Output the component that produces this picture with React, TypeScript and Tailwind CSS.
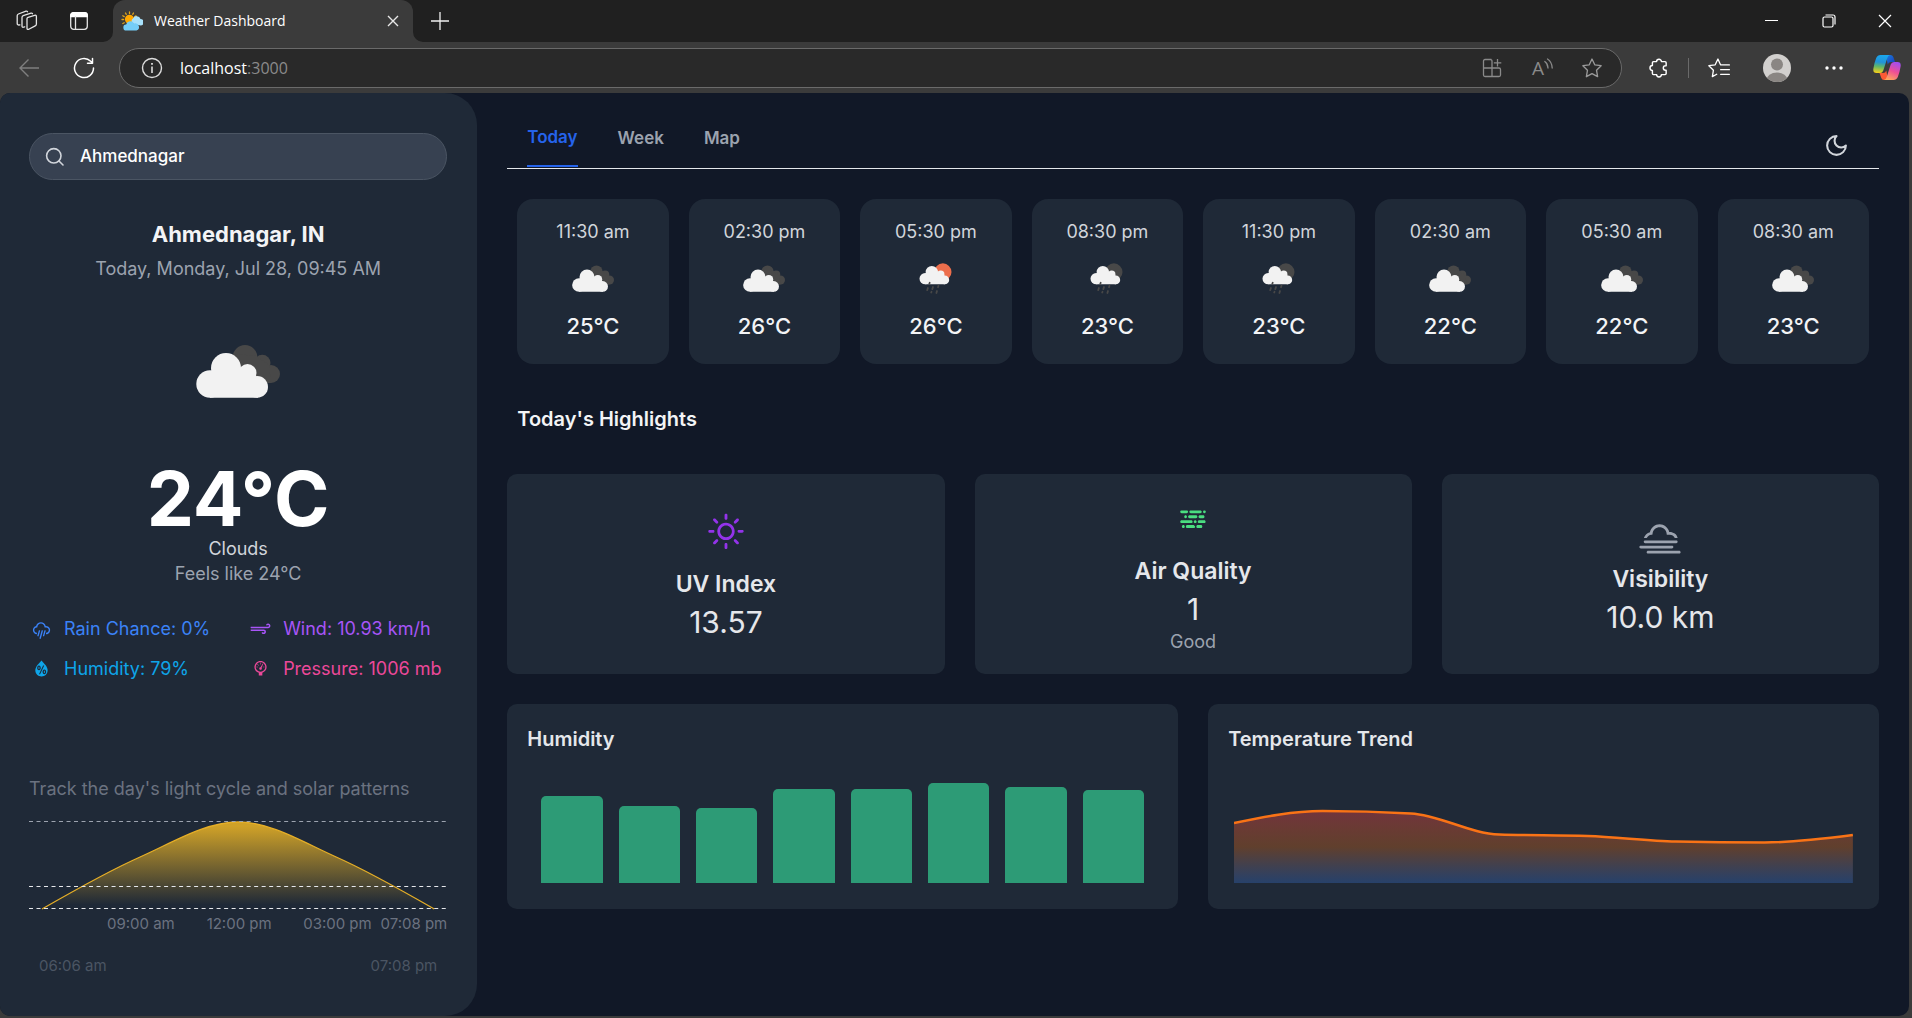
import React, { useState } from "react";
import {
  WiBarometer,
  WiDaySunny,
  WiDust,
  WiFog,
  WiHumidity,
  WiRain,
  WiStrongWind,
} from "react-icons/wi";

type Point = [number, number];

/** Builds a monotone cubic path through the points, so peaks stay flat. */
function monotonePath(points: Point[]): string {
  const n = points.length;
  const slopes: number[] = [];
  for (let i = 0; i < n - 1; i++) {
    slopes.push((points[i + 1][1] - points[i][1]) / (points[i + 1][0] - points[i][0]));
  }
  const tangents = points.map((_, i) => {
    if (i === 0 || i === n - 1) return 0;
    const a = slopes[i - 1];
    const b = slopes[i];
    return (Math.sign(a) + Math.sign(b)) * Math.min(Math.abs(a), Math.abs(b), 0.5 * Math.abs((a + b) / 2)) || 0;
  });
  tangents[0] = (3 * slopes[0] - tangents[1]) / 2;
  tangents[n - 1] = (3 * slopes[n - 2] - tangents[n - 2]) / 2;
  let d = `M${points[0][0]},${points[0][1]}`;
  for (let i = 0; i < n - 1; i++) {
    const [x0, y0] = points[i];
    const [x1, y1] = points[i + 1];
    const dx = (x1 - x0) / 3;
    d += `C${x0 + dx},${y0 + dx * tangents[i]},${x1 - dx},${y1 - dx * tangents[i + 1]},${x1},${y1}`;
  }
  return d;
}

function WhiteCloud() {
  return (
    <g fill="#f2f2f2">
      <circle cx="52" cy="66" r="15" />
      <circle cx="36" cy="82" r="13.7" />
      <circle cx="73.5" cy="71" r="9" />
      <circle cx="83.2" cy="84.9" r="10.8" />
      <path d="M36 70L52 60L67 66L74 66L82.5 74.1L84 95.7H36z" />
    </g>
  );
}

function CloudsIcon({ className }: { className: string }) {
  return (
    <svg viewBox="0 0 128 128" className={className} aria-label="Clouds" role="img">
      <g fill="#484848">
        <circle cx="71" cy="55.5" r="12.4" />
        <circle cx="88.3" cy="61" r="8.2" />
        <circle cx="97" cy="72" r="9" />
        <path d="M62 52L82 54L95 63L97 81L80 81L60 70z" />
      </g>
      <WhiteCloud />
    </svg>
  );
}

function RainIcon({ className, day }: { className: string; day: boolean }) {
  return (
    <svg viewBox="0 0 128 128" className={className} aria-label="Rain" role="img">
      <circle cx="77.7" cy="56" r="17.3" fill={day ? "#ec6e4c" : "#484848"} />
      <g transform="translate(12.6 1.6) scale(0.827)">
        <WhiteCloud />
      </g>
      <g stroke="#484848" strokeWidth="3.6" strokeLinecap="round">
        <path d="M51.4 77.5L50.6 79.5M47.8 88L46.4 92.4M58 86L56.6 90.2M69 83.5L68 86.5M55 95.6L54.4 97M66 94L64.8 98" />
      </g>
    </svg>
  );
}

function WorkspacesIcon() {
  return (
    <svg viewBox="0 0 22 22" className="size-[22px]" fill="none" stroke="#e4e4e4" strokeWidth="1.3" strokeLinejoin="round" strokeLinecap="round">
      <path d="M11 8.6q0-1 1-1.3l6.6-2q1.6-.4 1.8 1.2v7.6q0 1.3-1.2 1.8l-6.4 3.4q-1.6.6-1.8-1z" />
      <path d="M8.7 16.8l-1.2.4Q6 17.6 6 16V7.6q0-1.4 1.2-1.9L15 3.2q1-.3 1.5.5" />
      <path d="M3.9 14.8l-1 .2Q1.2 15 1.2 13.4V5.8q0-1.3 1.2-1.8L10 1.2q1-.3 1.5.5" />
    </svg>
  );
}

function TabActionsIcon() {
  return (
    <svg viewBox="0 0 20 20" className="size-5" fill="none" stroke="#e4e4e4" strokeWidth="1.3">
      <rect x="1.7" y="1.7" width="16.6" height="16.6" rx="3" />
      <path d="M1.7 5.5V4.5a2.8 2.8 0 0 1 2.8-2.8h11a2.8 2.8 0 0 1 2.8 2.8v1z" fill="#fff" stroke="#fff" />
      <path d="M6.5 5v13" />
    </svg>
  );
}

function Favicon() {
  return (
    <svg viewBox="0 0 22 22" className="size-[22px]">
      <g stroke="#e0a61c" strokeWidth="1.3" strokeLinecap="round">
        <path d="M8.5 2v1.5M4.5 3l.8 1.3M12.5 3l-.8 1.3M1.8 5.8l1.4.8M15 5.8l-1.2.8M1 9.5h1.5M1.8 13.5l1.4-.8" />
      </g>
      <circle cx="8.5" cy="9.3" r="4.6" fill="#ffa800" />
      <path d="M13 14a3 3 0 0 1-1-5.5 4 4 0 0 1 7.5.5 3.2 3.2 0 0 1 0 6.5z" fill="#a8e1fb" />
      <path d="M5.5 20.5a3 3 0 0 1-.3-6 4.2 4.2 0 0 1 7.8-1 3.600 3.600 0 0 1 2.5 7z" fill="#74cdf8" />
    </svg>
  );
}

function CopilotIcon() {
  return (
    <svg viewBox="0 0 28 27" className="h-[27px] w-7">
      <defs>
        <linearGradient id="cp-left" x1="0.5" y1="0" x2="0.4" y2="1">
          <stop offset="0" stopColor="#1aa7ee" />
          <stop offset="0.4" stopColor="#2293d8" />
          <stop offset="0.65" stopColor="#5fb76a" />
          <stop offset="1" stopColor="#f2cf1c" />
        </linearGradient>
        <linearGradient id="cp-right" x1="0.7" y1="0" x2="0.3" y2="1">
          <stop offset="0" stopColor="#a34df0" />
          <stop offset="0.5" stopColor="#ee4f95" />
          <stop offset="1" stopColor="#fda75c" />
        </linearGradient>
        <linearGradient id="cp-top" x1="0" y1="0" x2="1" y2="1">
          <stop offset="0" stopColor="#1b7fe0" />
          <stop offset="1" stopColor="#1738b8" />
        </linearGradient>
      </defs>
      <path d="M13 1h4.5q2 0 2.8 2l1.7 5h-4q-2.5 0-3.3 2.5z" fill="url(#cp-top)" />
      <path d="M15 26h-4q-2 0-2.7-2L6.5 19H10q2.5 0 3.3-2.5z" fill="#fb5a35" />
      <path d="M7.5 1H17q-2 .3-2.7 3l-4 12.5Q9.500 19 7 19H3.500Q-.3 19 .4 14.500 1.200 9 3.200 4 4.500 1 7.500 1z" fill="url(#cp-left)" />
      <path d="M20.5 26H11q2-.3 2.700-3l4-12.500Q18.500 8 21 8h3.500q3.800 0 3.100 4.500-.8 5.500-2.800 10.500-1.300 3-4.300 3z" fill="url(#cp-right)" />
    </svg>
  );
}

const starPath =
  "M10 1.8l2.5 5.3 5.8.8-4.2 4.1 1 5.9-5.1-2.8-5.1 2.8 1-5.9-4.2-4.1 5.8-.8z";

function BrowserTabs() {
  return (
    <div className="flex h-[42px] items-center bg-[#202020] font-['Open_Sans','Noto_Sans',sans-serif]">
      <button type="button" aria-label="Workspaces" className="ml-4 flex">
        <WorkspacesIcon />
      </button>
      <button type="button" aria-label="Tab actions" className="ml-[31px] flex">
        <TabActionsIcon />
      </button>
      <div className="relative ml-6 flex h-full w-[300px] items-center rounded-t-xl bg-[#3b3b3b] pr-3 pl-2 text-white">
        <svg viewBox="0 0 10 10" className="absolute right-full bottom-0 size-2.5" aria-hidden="true">
          <path d="M10 0v10H0A10 10 0 0 0 10 0z" fill="#3b3b3b" />
        </svg>
        <svg viewBox="0 0 10 10" className="absolute bottom-0 left-full size-2.5" aria-hidden="true">
          <path d="M0 0v10h10A10 10 0 0 1 0 0z" fill="#3b3b3b" />
        </svg>
        <Favicon />
        <span className="ml-[11px] flex-1 text-[14px] leading-5">Weather Dashboard</span>
        <button type="button" aria-label="Close tab" className="flex">
          <svg viewBox="0 0 16 16" className="size-4" stroke="#e8e8e8" strokeWidth="1.4">
            <path d="M3 3l10 10M13 3L3 13" />
          </svg>
        </button>
      </div>
      <button type="button" aria-label="New tab" className="ml-[17px] flex">
        <svg viewBox="0 0 20 20" className="size-5" stroke="#f0f0f0" strokeWidth="1.3">
          <path d="M10 1v18M1 10h18" />
        </svg>
      </button>
      <div className="ml-auto flex h-full">
        <button type="button" aria-label="Minimize" className="flex w-[58px] items-center justify-center">
          <svg viewBox="0 0 14 14" className="size-3.5" stroke="#fff">
            <path d="M1 6.5h13" />
          </svg>
        </button>
        <button type="button" aria-label="Restore" className="flex w-[58px] items-center justify-center">
          <svg viewBox="0 0 14 14" className="size-3.5" fill="none" stroke="#fff" strokeWidth="1.2">
            <rect x="1" y="3" width="10" height="10" rx="1.5" />
            <path d="M3.5 1H11q2 0 2 2v7.5" />
          </svg>
        </button>
        <button type="button" aria-label="Close" className="flex w-[54px] items-center justify-center">
          <svg viewBox="0 0 14 14" className="size-3.5" stroke="#fff" strokeWidth="1.2">
            <path d="M1 1l12 12M13 1L1 13" />
          </svg>
        </button>
      </div>
    </div>
  );
}

function BrowserToolbar() {
  return (
    <div className="flex h-[51px] items-center bg-[#3b3b3b] pr-[11px] pl-[19px] font-['Open_Sans','Noto_Sans',sans-serif]">
      <button type="button" aria-label="Back" className="flex">
        <svg viewBox="0 0 20 20" className="size-5" fill="none" stroke="#7f7f7f" strokeWidth="1.4">
          <path d="M20 10H1M9.5 1.5L1 10l8.5 8.5" />
        </svg>
      </button>
      <button type="button" aria-label="Refresh" className="ml-[34px] flex">
        <svg viewBox="0 0 22 22" className="size-[22px]" fill="none" stroke="#fff" strokeWidth="1.5" strokeLinecap="round" strokeLinejoin="round">
          <path d="M20.5 11A9.5 9.5 0 1 1 17.7 4.3L19.5 6M19.5 1.5V6.2H14.5" />
        </svg>
      </button>
      <div className="ml-6 flex h-10 flex-1 items-center rounded-full border border-[#6a6a6a] bg-[#292929] pr-[18px] pl-[21px]">
        <svg viewBox="0 0 22 22" className="size-[22px]" fill="none" stroke="#dcdcdc" strokeWidth="1.4" aria-hidden="true">
          <circle cx="11" cy="11" r="9.5" />
          <path d="M11 9.5v6.5" strokeWidth="1.6" />
          <path d="M11 6v1.8" strokeWidth="1.8" />
        </svg>
        <a href="http://localhost:3000" className="ml-[17px] flex-1 text-[16px] text-white">
          localhost<span className="text-[#8b8b8b]">:3000</span>
        </a>
        <button type="button" aria-label="App available" className="flex">
          <svg viewBox="0 0 20 20" className="size-5" fill="none" stroke="#8a8a8a" strokeWidth="1.3">
            <path d="M9.5 1.5H3A1.5 1.5 0 0 0 1.5 3v14A1.5 1.5 0 0 0 3 18.5h14a1.5 1.5 0 0 0 1.5-1.5v-5.5a1.5 1.5 0 0 0-1.5-1.5H1.5M10 18.5V3A1.5 1.5 0 0 0 8.5 1.5M15.5 1v7.5M11.8 4.8h7.5" />
          </svg>
        </button>
        <button type="button" aria-label="Read aloud" className="ml-[30px] flex items-end text-[19px] leading-5 text-[#8a8a8a]">
          A
          <svg viewBox="0 0 9 14" className="h-3.5 w-[9px] self-start" fill="none" stroke="#8a8a8a" strokeWidth="1.3" strokeLinecap="round">
            <path d="M0.8 3.5q3 2 3.2 6.5M3.5 1q4.500 3 4.700 9" />
          </svg>
        </button>
        <button type="button" aria-label="Add to favorites" className="ml-7 flex">
          <svg viewBox="0 0 20 20" className="size-[22px]" fill="none" stroke="#9a9a9a" strokeWidth="1.2" strokeLinejoin="round">
            <path d={starPath} />
          </svg>
        </button>
      </div>
      <button type="button" aria-label="Extensions" className="ml-[26px] flex">
        <svg viewBox="0 0 20 20" className="size-[22px]" fill="none" stroke="#fff" strokeWidth="1.3" strokeLinejoin="round">
          <path d="M5 4.2h2.8a2.2 2.2 0 0 1 4.4 0H15.5q1 0 1 1V8h-.6a2 2 0 0 0 0 4h.6v3q0 1-1 1H12.2a2.2 2.2 0 0 1-4.4 0H5q-1 0-1-1v-2.8a2.2 2.2 0 0 1 0-4.4V5.2q0-1 1-1z" />
        </svg>
      </button>
      <span className="ml-[18px] h-5 w-px bg-[#6a6a6a]" />
      <button type="button" aria-label="Favorites" className="ml-[18px] flex">
        <svg viewBox="0 0 22 20" className="h-[22px] w-6" fill="none" stroke="#fff" strokeWidth="1.2" strokeLinejoin="round" strokeLinecap="round">
          <path d="M13 7.200l-.6-.1L10 1.800 7.500 7.100l-5.800.8 4.200 4.100-1 5.900 4-2.200M13.500 7.200h7M12.500 11.500h8M12.500 15.800h8" />
        </svg>
      </button>
      <button type="button" aria-label="Profile" className="ml-8 flex">
        <svg viewBox="0 0 28 28" className="size-7">
          <defs>
            <clipPath id="avatar">
              <circle cx="14" cy="14" r="14" />
            </clipPath>
          </defs>
          <g clipPath="url(#avatar)">
            <rect width="28" height="28" fill="#d2d0ce" />
            <circle cx="14" cy="10.5" r="6" fill="#8a8683" />
            <ellipse cx="14" cy="26" rx="10.5" ry="7.5" fill="#8a8683" />
          </g>
        </svg>
      </button>
      <button type="button" aria-label="Settings and more" className="ml-[34px] flex">
        <svg viewBox="0 0 18 4" className="h-1 w-[18px]" fill="#fff">
          <circle cx="2" cy="2" r="1.7" />
          <circle cx="9" cy="2" r="1.7" />
          <circle cx="16" cy="2" r="1.7" />
        </svg>
      </button>
      <button type="button" aria-label="Copilot" className="ml-[30px] flex">
        <CopilotIcon />
      </button>
    </div>
  );
}

const metrics = [
  { label: "Rain Chance: 0%", Icon: WiRain, color: "text-[#3b82f6]" },
  { label: "Wind: 10.93 km/h", Icon: WiStrongWind, color: "text-[#a855f7]" },
  { label: "Humidity: 79%", Icon: WiHumidity, color: "text-[#0ea5e9]" },
  { label: "Pressure: 1006 mb", Icon: WiBarometer, color: "text-[#ec4899]" },
];

const sunPoints: Point[] = [
  [13, 88],
  [111, 36],
  [209, 1],
  [307, 36],
  [405, 88],
];

function SunChart() {
  const line = monotonePath(sunPoints);
  return (
    <div className="mt-5">
      <svg viewBox="0 0 418 89" preserveAspectRatio="none" className="block h-[89px] w-full" role="img" aria-label="Sun position">
        <defs>
          <linearGradient id="sun" x1="0" y1="0" x2="0" y2="1">
            <stop offset="0.05" stopColor="#fbbf24" stopOpacity="0.8" />
            <stop offset="0.95" stopColor="#fbbf24" stopOpacity="0" />
          </linearGradient>
        </defs>
        <path d={`${line}L13,88Z`} fill="url(#sun)" />
        <path d={line} fill="none" stroke="#e5ae27" strokeWidth="1.3" />
        <path d="M0 .5H418" stroke="#9ca3af" strokeDasharray="4 3.5" />
        <path d="M0 65.5H418M0 87.5H418" stroke="#e5e7eb" strokeDasharray="4 3.5" />
      </svg>
      <div className="mt-1 flex text-[15px] leading-5 whitespace-nowrap text-[#6b7280]">
        <span className="w-[15%]" />
        <span className="w-[23.5%] text-center">09:00 am</span>
        <span className="w-[23.5%] text-center">12:00 pm</span>
        <span className="w-[23.5%] text-center">03:00 pm</span>
        <span className="flex min-w-0 flex-1 justify-end">07:08 pm</span>
      </div>
      <div className="mt-[22px] flex justify-between px-2.5 text-[15px] leading-5 text-[#4b5563]">
        <span>06:06 am</span>
        <span>07:08 pm</span>
      </div>
    </div>
  );
}

function Sidebar() {
  const [query, setQuery] = useState("Ahmednagar");
  return (
    <aside className="flex w-1/4 shrink-0 flex-col rounded-r-4xl bg-[#1f2937] pt-10 pr-[30px] pb-9 pl-[29px]">
      <label className="flex h-[47px] items-center rounded-full border border-[#4b5563] bg-[#374151] pl-[15px]">
        <svg viewBox="0 0 20 20" className="size-5 shrink-0" fill="none" stroke="#d1d5db" strokeWidth="1.6" strokeLinecap="round" aria-hidden="true">
          <circle cx="8.8" cy="8.8" r="7.2" />
          <path d="M14 14l4 4" />
        </svg>
        <input
          type="text"
          aria-label="Search city"
          value={query}
          onChange={(e) => setQuery(e.target.value)}
          className="ml-[15px] min-w-0 flex-1 bg-transparent text-[17px] font-medium text-white outline-none"
        />
      </label>
      <div className="mt-9 flex flex-col items-center text-center">
        <h1 className="text-[22px] leading-9 font-bold text-[#f3f4f6]">Ahmednagar, IN</h1>
        <p className="mt-1 text-[18px] leading-[25px] text-[#9ca3af]">Today, Monday, Jul 28, 09:45 AM</p>
        <CloudsIcon className="mt-[21px] size-32" />
        <p className="mt-[31px] text-[75px] leading-none font-bold text-white">24°C</p>
        <p className="text-[18px] leading-[25px] text-[#d1d5db]">Clouds</p>
        <p className="text-[18px] leading-[25px] text-[#9ca3af]">Feels like 24°C</p>
      </div>
      <ul className="mt-[30px] grid grid-cols-2 gap-x-5 gap-y-[15px] text-[18px] leading-[25px] whitespace-nowrap">
        {metrics.map(({ label, Icon, color }) => (
          <li key={label} className={`flex items-center gap-2.5 ${color}`}>
            <Icon size={25} className="shrink-0" />
            {label}
          </li>
        ))}
      </ul>
      <p className="mt-[95px] text-[18px] leading-[25px] whitespace-nowrap text-[#6b7280]">
        Track the day's light cycle and solar patterns
      </p>
      <SunChart />
    </aside>
  );
}

const hours = [
  { time: "11:30 am", icon: "clouds", temp: "25°C" },
  { time: "02:30 pm", icon: "clouds", temp: "26°C" },
  { time: "05:30 pm", icon: "rain-day", temp: "26°C" },
  { time: "08:30 pm", icon: "rain-night", temp: "23°C" },
  { time: "11:30 pm", icon: "rain-night", temp: "23°C" },
  { time: "02:30 am", icon: "clouds", temp: "22°C" },
  { time: "05:30 am", icon: "clouds", temp: "22°C" },
  { time: "08:30 am", icon: "clouds", temp: "23°C" },
];

function HourlyForecast() {
  return (
    <div className="mt-[30px] grid grid-cols-8 gap-5 px-2.5">
      {hours.map(({ time, icon, temp }) => (
        <div key={time} className="flex flex-col items-center rounded-2xl bg-[#1f2937] py-5">
          <p className="text-[18px] leading-[25px] text-[#d1d5db]">{time}</p>
          {icon === "clouds" ? (
            <CloudsIcon className="size-16" />
          ) : (
            <RainIcon className="size-16" day={icon === "rain-day"} />
          )}
          <p className="text-[22px] leading-9 font-medium text-[#f3f4f6]">{temp}</p>
        </div>
      ))}
    </div>
  );
}

const highlightCard =
  "flex h-[200px] flex-col items-center justify-center rounded-[10px] bg-[#1f2937] text-[#e5e7eb]";

function Highlights() {
  return (
    <div className="grid grid-cols-3 gap-[30px]">
      <section className={highlightCard}>
        <WiDaySunny size={50} className="mb-2.5 text-[#9333ea]" />
        <h3 className="text-[23px] leading-[35px] font-semibold">UV Index</h3>
        <p className="text-[30px] leading-10">13.57</p>
      </section>
      <section className={highlightCard}>
        <WiDust size={50} className="mb-2.5 text-[#4ade80]" />
        <h3 className="text-[23px] leading-[35px] font-semibold">Air Quality</h3>
        <p className="text-[30px] leading-10">1</p>
        <p className="text-[18px] leading-[25px] text-[#9ca3af]">Good</p>
      </section>
      <section className={highlightCard}>
        <WiFog size={50} className="text-[#9ca3af]" />
        <h3 className="text-[23px] leading-[35px] font-semibold">Visibility</h3>
        <p className="text-[30px] leading-10">10.0 km</p>
      </section>
    </div>
  );
}

const humidity = [87, 77, 75, 94, 94, 100, 96, 93];

function HumidityCard() {
  return (
    <section className="rounded-[10px] bg-[#1f2937] px-5 pt-5 pb-[26px] text-[#e5e7eb]">
      <h3 className="text-[20px] leading-[30px] font-semibold">Humidity</h3>
      <div className="flex h-[129px] items-end gap-4 px-3.5">
        {humidity.map((height, i) => (
          <div key={i} className="flex-1 rounded-t-[5px] bg-[#2d9b76]" style={{ height }} />
        ))}
      </div>
    </section>
  );
}

const trendPoints: Point[] = [
  [0, 69],
  [88.4, 57],
  [176.9, 59.5],
  [265.3, 80.5],
  [353.7, 82],
  [442.1, 87.5],
  [530.6, 88.5],
  [619, 81],
];

function TemperatureCard() {
  const line = monotonePath(trendPoints);
  return (
    <section className="rounded-[10px] bg-[#1f2937] px-5 pt-5 pb-[26px] text-[#e5e7eb]">
      <h3 className="text-[20px] leading-[30px] font-semibold">Temperature Trend</h3>
      <div className="px-1.5">
        <svg viewBox="0 0 619 129" preserveAspectRatio="none" className="block h-[129px] w-full" role="img" aria-label="Temperature trend">
          <defs>
            <linearGradient id="trend" x1="0" y1="0" x2="0" y2="1">
              <stop offset="0" stopColor="#ef4444" stopOpacity="0.4" />
              <stop offset="0.5" stopColor="#f97316" stopOpacity="0.3" />
              <stop offset="1" stopColor="#3b82f6" stopOpacity="0.27" />
            </linearGradient>
          </defs>
          <path d={`${line}V129H0Z`} fill="url(#trend)" />
          <path d={line} fill="none" stroke="#f97316" strokeWidth="2.5" />
        </svg>
      </div>
    </section>
  );
}

const views = ["Today", "Week", "Map"];

function Main() {
  const [view, setView] = useState("Today");
  return (
    <main className="min-w-0 flex-1 px-[30px] pt-[30px]">
      <nav className="flex h-[46px] items-start gap-10 border-b border-[#e5e7eb] pr-[30px] pl-5">
        {views.map((name) => (
          <button
            key={name}
            type="button"
            onClick={() => setView(name)}
            className={
              name === view
                ? "flex h-11 items-center border-b-2 border-[#2563eb] pb-3 text-[17px] font-semibold text-[#2563eb]"
                : "flex h-11 items-center pb-3 text-[17px] font-semibold text-[#9ca3af]"
            }
          >
            {name}
          </button>
        ))}
        <button type="button" aria-label="Toggle dark mode" className="ml-auto flex h-full items-center">
          <svg viewBox="0 0 24 24" className="size-[25px]" fill="none" stroke="#d1d5db" strokeWidth="2" strokeLinejoin="round">
            <path d="M12 3a6 6 0 0 0 9 9 9 9 0 1 1-9-9Z" />
          </svg>
        </button>
      </nav>
      <HourlyForecast />
      <h2 className="my-10 px-2.5 text-[20px] leading-[30px] font-semibold text-[#f3f4f6]">Today's Highlights</h2>
      <Highlights />
      <div className="mt-[30px] grid grid-cols-2 gap-[30px]">
        <HumidityCard />
        <TemperatureCard />
      </div>
    </main>
  );
}

export default function App() {
  return (
    <div className="flex min-h-screen flex-col bg-[#3b3b3b]">
      <BrowserTabs />
      <BrowserToolbar />
      <div className="mr-[3px] mb-0.5 flex flex-1 overflow-hidden rounded-[10px] bg-[#111827] font-['Inter',sans-serif]">
        <Sidebar />
        <Main />
      </div>
    </div>
  );
}
